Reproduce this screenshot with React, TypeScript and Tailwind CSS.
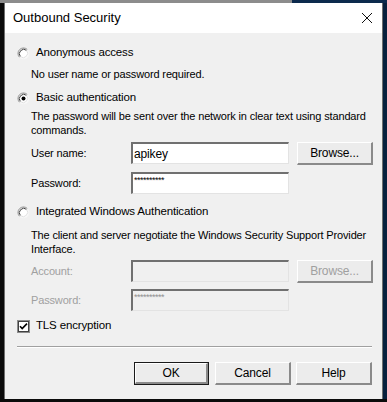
import React from "react";

const font = { fontFamily: '"Liberation Sans", Arial, sans-serif' };

function Radio({ checked }: { checked?: boolean }) {
  return (
    <svg width="13" height="13" viewBox="0 0 13 13" className="shrink-0">
      <circle cx="6.5" cy="6.5" r="5.5" fill="#ffffff" />
      <path d="M2.6 10.4 A5.5 5.5 0 0 1 10.4 2.6" stroke="#8c8c8c" strokeWidth="1" fill="none" />
      <path d="M3.4 9.6 A4.4 4.4 0 0 1 9.6 3.4" stroke="#404040" strokeWidth="1" fill="none" />
      <path d="M10.4 2.6 A5.5 5.5 0 0 1 2.6 10.4" stroke="#f4f4f4" strokeWidth="1" fill="none" />
      <path d="M9.6 3.4 A4.4 4.4 0 0 1 3.4 9.6" stroke="#e0e0e0" strokeWidth="1" fill="none" />
      {checked && <circle cx="6.5" cy="6.5" r="2" fill="#000000" />}
    </svg>
  );
}

function Field({ value, disabled, password }: { value?: string; disabled?: boolean; password?: boolean }) {
  return (
    <div
      className={`w-[158px] h-[22px] border-t-2 border-l-2 border-t-[#707070] border-l-[#707070] border-r border-b border-r-[#e3e3e3] border-b-[#e3e3e3] flex ${
        password ? "items-start pt-[1px]" : "items-center"
      } pl-[1px] ${disabled ? "bg-[#f0f0f0] text-[#909090]" : "bg-white text-black"}`}
    >
      <span className={password ? "text-[9px] leading-[10px] tracking-[-0.5px]" : "text-[12px]"}>{value}</span>
    </div>
  );
}

function Button({ label, disabled, isDefault, w = "w-[76px]" }: { label: string; disabled?: boolean; isDefault?: boolean; w?: string }) {
  return (
    <div className={`${w} h-[23px] ${isDefault ? "border border-[#1a1a1a]" : ""}`}>
      <div
        className={`w-full h-full border-t border-l border-t-white border-l-white border-r-2 border-b-2 border-r-[#8a8a8a] border-b-[#8a8a8a] bg-[#ececec] flex items-center justify-center text-[12px] ${
          disabled ? "text-[#a0a0a0]" : "text-black"
        }`}
      >
        {label}
      </div>
    </div>
  );
}

export default function App() {
  return (
    <div className="w-[387px] h-[402px] bg-[#0b0b0b] flex flex-col overflow-hidden" style={font}>
      <div className="h-[3px] flex shrink-0">
        <div className="w-[292px] bg-[#8c8c8c]" />
        <div className="flex-1 bg-[#0c2a4d]" />
      </div>
      <div className="flex flex-1">
        <div className="w-[4px] bg-[#0b0b0b]" />
        <div className="w-[379px] h-[396px] flex flex-col border-x border-[#6f6f6f]">
          <div className="h-[30px] bg-white flex items-center justify-between pl-[8px] pr-[9px] shrink-0">
            <span className="text-[13px] text-black">Outbound Security</span>
            <svg width="12" height="12" viewBox="0 0 12 12">
              <path d="M1 1 L11 11 M11 1 L1 11" stroke="#111" strokeWidth="1" />
            </svg>
          </div>
          <div className="flex-1 bg-[#f0f0f0] flex flex-col text-[11px] tracking-[-0.15px] text-black pl-[12px]">
            <div className="mt-[12px] h-[16px] flex items-center gap-[6px]">
              <Radio />
              <span className="text-[11.5px]">Anonymous access</span>
            </div>
            <div className="mt-[6px] h-[14px] leading-[14px] pl-[14px]">No user name or password required.</div>
            <div className="mt-[9px] h-[16px] flex items-center gap-[6px]">
              <Radio checked />
              <span className="text-[11.5px]">Basic authentication</span>
            </div>
            <div className="mt-[3px] leading-[14px] pl-[14px] whitespace-nowrap">
              The password will be sent over the network in clear text using standard
              <br />
              commands.
            </div>
            <div className="mt-[5px] h-[23px] flex items-start pl-[14px]">
              <div className="w-[100px] h-[22px] flex items-center">User name:</div>
              <Field value="apikey" />
              <div className="ml-[8px]">
                <Button label="Browse..." />
              </div>
            </div>
            <div className="mt-[7px] h-[22px] flex items-start pl-[14px]">
              <div className="w-[100px] h-[22px] flex items-center">Password:</div>
              <Field value="**********" password />
            </div>
            <div className="mt-[10px] h-[16px] flex items-center gap-[6px]">
              <Radio />
              <span className="text-[11.5px]">Integrated Windows Authentication</span>
            </div>
            <div className="mt-[8px] leading-[14px] pl-[14px] whitespace-nowrap">
              The client and server negotiate the Windows Security Support Provider
              <br />
              Interface.
            </div>
            <div className="mt-[4px] h-[23px] flex items-start pl-[14px] text-[#a0a0a0]">
              <div className="w-[100px] h-[22px] flex items-center">Account:</div>
              <Field disabled />
              <div className="ml-[8px]">
                <Button label="Browse..." disabled />
              </div>
            </div>
            <div className="mt-[6px] h-[22px] flex items-start pl-[14px] text-[#a0a0a0]">
              <div className="w-[100px] h-[22px] flex items-center">Password:</div>
              <Field value="**********" password disabled />
            </div>
            <div className="mt-[7px] h-[16px] flex items-center gap-[6px]">
              <svg width="13" height="13" viewBox="0 0 13 13" className="shrink-0">
                <rect x="0.5" y="0.5" width="12" height="12" fill="#ffffff" stroke="#8c8c8c" />
                <rect x="1.5" y="1.5" width="10" height="10" fill="none" stroke="#404040" />
                <path d="M3 6.2 L5.2 8.6 L10 3.6" stroke="#000" strokeWidth="1.6" fill="none" />
              </svg>
              <span className="text-[11.5px]">TLS encryption</span>
            </div>
            <div className="mt-[12px] mr-[10px] h-[2px] border-t border-t-[#a0a0a0] border-b border-b-white" />
            <div className="mt-[14px] flex justify-end pr-[10px]">
              <Button label="OK" isDefault w="w-[75px]" />
              <div className="ml-[6px]">
                <Button label="Cancel" />
              </div>
              <div className="ml-[5px]">
                <Button label="Help" />
              </div>
            </div>
          </div>
        </div>
        <div className="flex-1 bg-[#08203d]" />
      </div>
      <div className="h-[3px] bg-[#0b0b0b] shrink-0" />
    </div>
  );
}
